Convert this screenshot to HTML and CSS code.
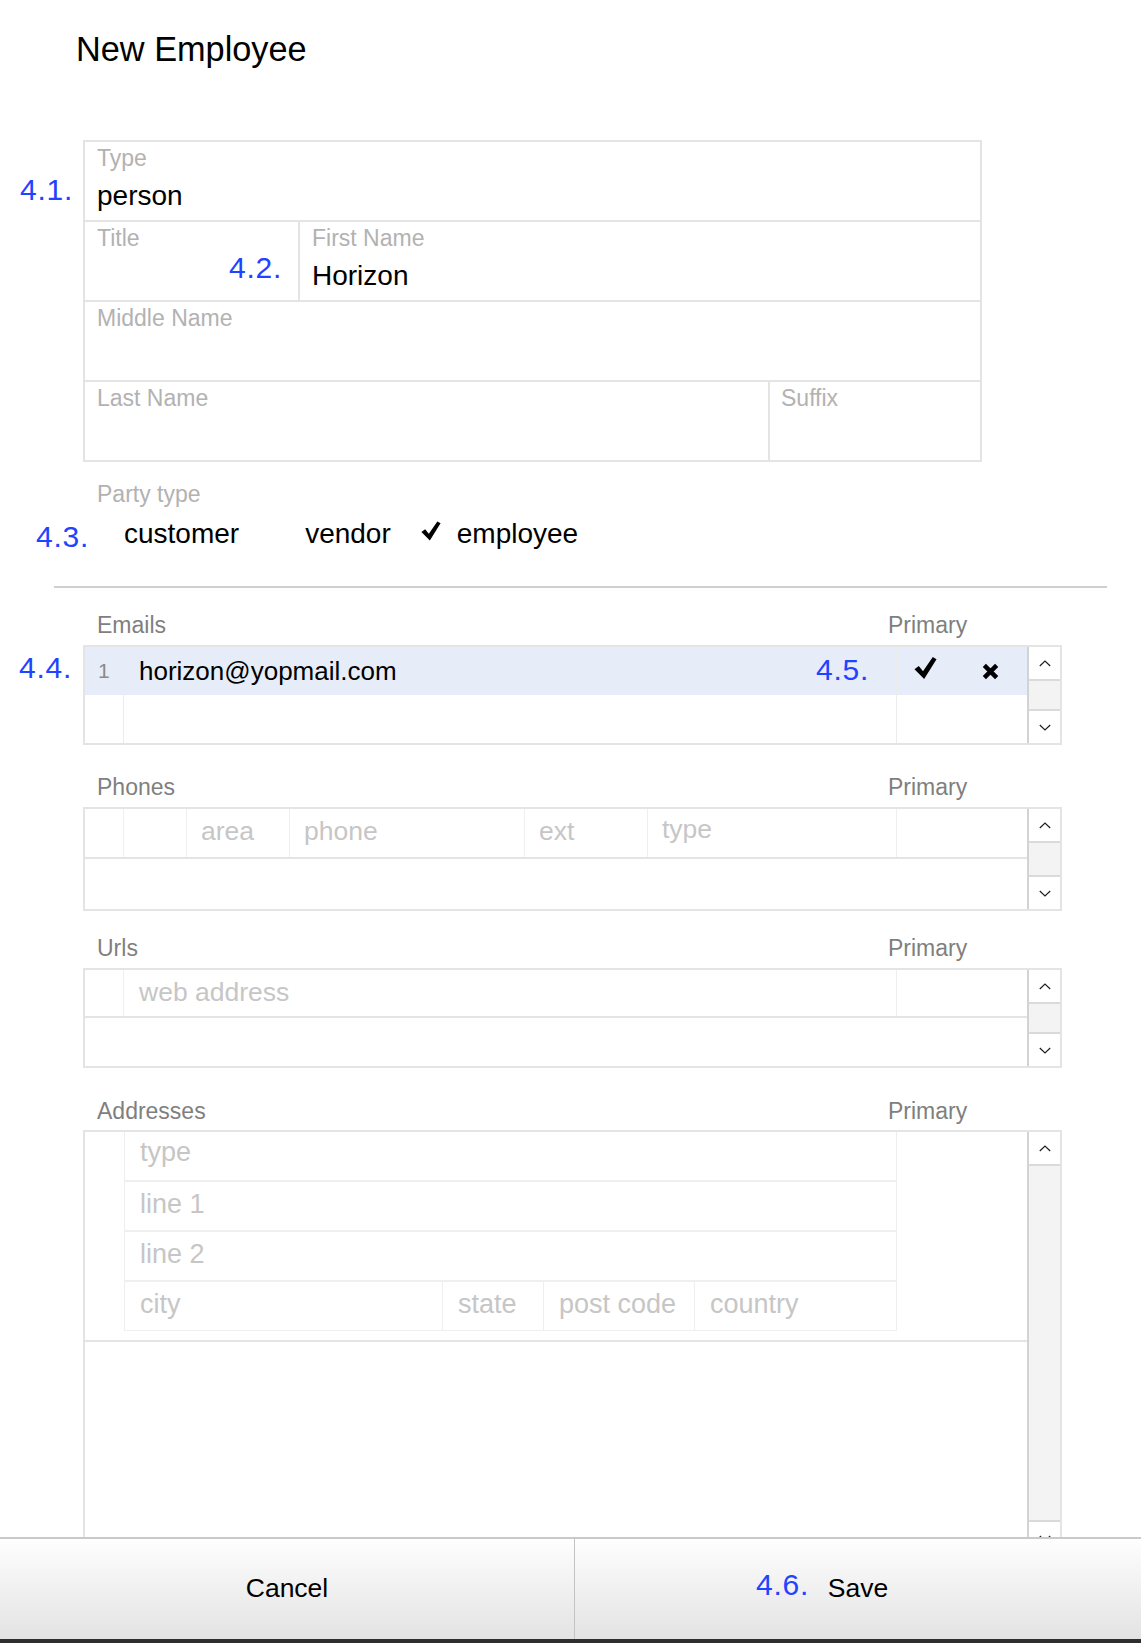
FILE: index.html
```html
<!DOCTYPE html>
<html>
<head>
<meta charset="utf-8">
<title>New Employee</title>
<link rel="stylesheet" href="styles.css">
</head>
<body>
<div class="app">
  <div class="content">
    <div class="header"><h1 class="title">New Employee</h1></div>

    <div class="form">
      <div class="form-row">
        <div class="cell grow"><div class="field-label">Type</div><div class="field-value">person</div></div>
      </div>
      <div class="form-row">
        <div class="cell cell-title"><div class="field-label">Title</div></div>
        <div class="cell grow"><div class="field-label">First Name</div><div class="field-value">Horizon</div></div>
      </div>
      <div class="form-row">
        <div class="cell grow"><div class="field-label">Middle Name</div></div>
      </div>
      <div class="form-row">
        <div class="cell grow"><div class="field-label">Last Name</div></div>
        <div class="cell cell-suffix"><div class="field-label">Suffix</div></div>
      </div>
    </div>

    <div class="party">
      <div class="field-label">Party type</div>
      <div class="options">
        <div class="option"><span class="mark"></span><span>customer</span></div>
        <div class="option"><span class="mark"></span><span>vendor</span></div>
        <div class="option"><span class="mark"><svg class="check small" viewBox="0 0 24 24"><path d="M0.5 13.2 L5 9.8 L9.4 15.4 L19.6 0.5 L23.5 2.8 L10.6 23.5 Z"/></svg></span><span>employee</span></div>
      </div>
    </div>

    <div class="divider"></div>

    <section class="list first">
      <div class="list-head"><span class="name">Emails</span><span class="primary">Primary</span></div>
      <div class="grid">
        <div class="grid-body">
          <div class="row selected">
            <div class="c-num">1</div>
            <div class="c-main value-text">horizon@yopmail.com</div>
            <div class="c-prim">
              <svg class="check" viewBox="0 0 24 24"><path d="M0.5 13.2 L5 9.8 L9.4 15.4 L19.6 0.5 L23.5 2.8 L10.6 23.5 Z"/></svg>
              <svg class="cross" viewBox="0 0 16 16"><path d="M2.2 2.2 L13.8 13.8 M13.8 2.2 L2.2 13.8"/></svg>
            </div>
          </div>
          <div class="row">
            <div class="c-num"></div>
            <div class="c-main"></div>
            <div class="c-prim"></div>
          </div>
        </div>
        <div class="scroll">
          <div class="sbtn"><svg viewBox="0 0 12 7"><path d="M0.8 6 L6 1 L11.2 6"/></svg></div>
          <div class="track"></div>
          <div class="sbtn"><svg viewBox="0 0 12 7"><path d="M0.8 1 L6 6 L11.2 1"/></svg></div>
        </div>
      </div>
    </section>

    <section class="list">
      <div class="list-head"><span class="name">Phones</span><span class="primary">Primary</span></div>
      <div class="grid">
        <div class="grid-body">
          <div class="row new-row">
            <div class="c-num"></div>
            <div class="c-cc"></div>
            <div class="c-area ph">area</div>
            <div class="c-phone ph">phone</div>
            <div class="c-ext ph">ext</div>
            <div class="c-type ph select">type</div>
            <div class="c-prim"></div>
          </div>
          <div class="row tall"></div>
        </div>
        <div class="scroll">
          <div class="sbtn"><svg viewBox="0 0 12 7"><path d="M0.8 6 L6 1 L11.2 6"/></svg></div>
          <div class="track"></div>
          <div class="sbtn"><svg viewBox="0 0 12 7"><path d="M0.8 1 L6 6 L11.2 1"/></svg></div>
        </div>
      </div>
    </section>

    <section class="list urls">
      <div class="list-head"><span class="name">Urls</span><span class="primary">Primary</span></div>
      <div class="grid">
        <div class="grid-body">
          <div class="row new-row short">
            <div class="c-num"></div>
            <div class="c-main ph">web address</div>
            <div class="c-prim"></div>
          </div>
          <div class="row"></div>
        </div>
        <div class="scroll">
          <div class="sbtn"><svg viewBox="0 0 12 7"><path d="M0.8 6 L6 1 L11.2 6"/></svg></div>
          <div class="track"></div>
          <div class="sbtn"><svg viewBox="0 0 12 7"><path d="M0.8 1 L6 6 L11.2 1"/></svg></div>
        </div>
      </div>
    </section>

    <section class="list addresses">
      <div class="list-head"><span class="name">Addresses</span><span class="primary">Primary</span></div>
      <div class="grid address-grid">
        <div class="grid-body">
          <div class="addr-row">
            <div class="c-num plain"></div>
            <div class="addr-box">
              <div class="addr-line ph select">type</div>
              <div class="addr-line ph">line 1</div>
              <div class="addr-line ph">line 2</div>
              <div class="addr-line last">
                <div class="a-city ph">city</div>
                <div class="a-state ph">state</div>
                <div class="a-post ph">post code</div>
                <div class="a-country ph">country</div>
              </div>
            </div>
            <div class="c-prim plain"></div>
          </div>
        </div>
        <div class="scroll">
          <div class="sbtn"><svg viewBox="0 0 12 7"><path d="M0.8 6 L6 1 L11.2 6"/></svg></div>
          <div class="track"></div>
          <div class="sbtn"><svg viewBox="0 0 12 7"><path d="M0.8 1 L6 6 L11.2 1"/></svg></div>
        </div>
      </div>
    </section>
  </div>

  <div class="footer">
    <div class="fbtn cancel">Cancel</div>
    <div class="fbtn save">Save</div>
  </div>

  <span class="note n1">4.1.</span>
  <span class="note n2">4.2.</span>
  <span class="note n3">4.3.</span>
  <span class="note n4">4.4.</span>
  <span class="note n5">4.5.</span>
  <span class="note n6">4.6.</span>
</div>
</body>
</html>
```

FILE: styles.css
```css
* { box-sizing: border-box; }
html, body { margin: 0; padding: 0; background: #fff; }
body {
  font-family: "Liberation Sans", Arial, Helvetica, sans-serif;
  color: #000;
}

.app {
  position: relative;
  width: 1141px;
  height: 1643px;
  display: flex;
  flex-direction: column;
  overflow: hidden;
}
.content { flex: 1; min-height: 0; overflow: hidden; }

/* header */
.header { height: 140px; padding: 32px 0 0 76px; }
.title { margin: 0; font-size: 34.3px; line-height: 35px; font-weight: 400; }

/* top form */
.form {
  margin-left: 83px;
  width: 899px;
  border-top: 2px solid #e4e4e4;
  border-left: 2px solid #e4e4e4;
}
.form-row { display: flex; }
.cell {
  height: 80px;
  border-right: 2px solid #e4e4e4;
  border-bottom: 2px solid #e4e4e4;
  padding: 2px 12px 0 12px;
}
.grow { flex: 1; }
.cell-title { width: 215px; }
.cell-suffix { width: 212px; padding-left: 11px; }
.field-label { font-size: 23px; line-height: 28px; color: #b2b2b2; }
.field-value { font-size: 28px; line-height: 34px; margin-top: 7px; }

/* party type */
.party { padding-top: 18px; }
.party .field-label { margin-left: 97px; }
.options {
  display: flex;
  margin: 9px 0 0 88px;
  font-size: 28px;
  line-height: 34px;
}
.option { display: flex; align-items: baseline; margin-right: 30px; }
.mark { width: 36px; display: inline-block; }
.check { width: 23px; height: 23px; fill: #000; display: block; }
.check.small { width: 20px; height: 24px; }
.mark .check { display: inline-block; vertical-align: baseline; }

.divider { height: 2px; background: #d0d0d0; margin: 35px 34px 0 54px; }

/* lists */
.list { margin: 28px 0 0 83px; width: 979px; }
.list.first { margin-top: 23px; }
.list.urls { margin-top: 23px; }
.list.addresses { margin-top: 29px; }
.list-head {
  display: flex;
  padding-left: 14px;
  margin-bottom: 6px;
  font-size: 23px;
  line-height: 28px;
  color: #7f7f7f;
}
.list-head .name { flex: 1; }
.list-head .primary { width: 174px; }
.addresses .list-head { margin-bottom: 5px; }

.grid { display: flex; border: 2px solid #e4e4e4; }
.grid-body { flex: 1; display: flex; flex-direction: column; }
.row { display: flex; height: 48px; }
.row.tall { height: 50px; }
.row.new-row { height: 50px; }
.row.new-row.short { height: 48px; }
.row.selected { background: #e6edf8; }
.new-row { border-bottom: 2px solid #e4e4e4; }
.new-row > div { border-right: 1px solid #efefef; }
.new-row > div:last-child { border-right: 0; }

.c-num {
  width: 39px;
  border-right: 1px solid #ececec;
  padding-left: 13px;
  font-size: 21px;
  line-height: 48px;
  color: #8a8a8a;
}
.c-num.plain { border-right: 0; }
.c-main { flex: 1; border-right: 1px solid #ececec; }
.c-prim { width: 130px; display: flex; align-items: flex-end; }
.c-prim.plain { align-self: stretch; }
.value-text { font-size: 26px; line-height: 48px; padding-left: 15px; }
.selected .c-prim { padding: 0 0 15px 17px; }
.selected .check { width: 23px; height: 24px; }
.selected .cross { width: 17px; height: 17px; margin: 0 0 0 45px; stroke: #000; stroke-width: 4.2; fill: none; }

.c-cc { width: 63px; }
.c-area { width: 103px; }
.c-phone { width: 235px; }
.c-ext { width: 123px; }
.c-type { flex: 1; }

.ph {
  font-size: 26.5px;
  line-height: 44px;
  color: #c6c6c6;
  padding-left: 14px;
  white-space: nowrap;
}
.ph.select { line-height: 40px; }
.c-main.ph { padding-left: 15px; }

/* scrollbar */
.scroll {
  width: 33px;
  border-left: 2px solid #d3d3d3;
  display: flex;
  flex-direction: column;
}
.sbtn {
  height: 32px;
  display: flex;
  align-items: center;
  justify-content: center;
  background: #fff;
}
.sbtn svg { width: 12px; height: 7px; fill: none; stroke: #1e1e1e; stroke-width: 1.2; }
.track {
  flex: 1;
  background: #f3f3f3;
  border-top: 2px solid #dadada;
  border-bottom: 2px solid #dadada;
}

/* addresses */
.address-grid { height: 426px; }
.addr-row {
  display: flex;
  padding-bottom: 9px;
  border-bottom: 2px solid #e4e4e4;
}
.addr-box {
  flex: 1;
  border-left: 1px solid #eeeeee;
  border-right: 1px solid #eeeeee;
}
.addr-line {
  height: 50px;
  border-bottom: 2px solid #efefef;
  padding-left: 15px;
}
.addr-line.ph { font-size: 27px; }
.addr-line.last {
  height: 49px;
  display: flex;
  padding-left: 0;
  border-bottom: 1px solid #efefef;
}
.addr-line.last > div { border-right: 1px solid #efefef; padding-left: 15px; font-size: 27px; }
.addr-line.last > div:last-child { border-right: 0; }
.a-city { width: 318px; }
.a-state { width: 101px; }
.a-post { width: 151px; }
.a-country { flex: 1; }

/* footer */
.footer {
  flex: none;
  height: 106px;
  display: flex;
  border-top: 2px solid #c9c9c9;
  border-bottom: 4px solid #2e2e2e;
}
.fbtn {
  flex: 1;
  display: flex;
  align-items: center;
  justify-content: center;
  padding-bottom: 3px;
  font-size: 26.5px;
  line-height: 26px;
  background: linear-gradient(#fefefe, #e3e3e3);
}
.fbtn.cancel { flex: 0 0 575px; border-right: 1px solid #c3c3c3; }

/* annotations */
.note {
  position: absolute;
  font-size: 30px;
  line-height: 30px;
  letter-spacing: 0.8px;
  color: #1f43ff;
  white-space: nowrap;
}
.n1 { left: 20px; top: 175px; }
.n2 { left: 229px; top: 253px; }
.n3 { left: 36px; top: 522px; }
.n4 { left: 19px; top: 653px; }
.n5 { left: 816px; top: 655px; }
.n6 { left: 756px; top: 1570px; }
```
